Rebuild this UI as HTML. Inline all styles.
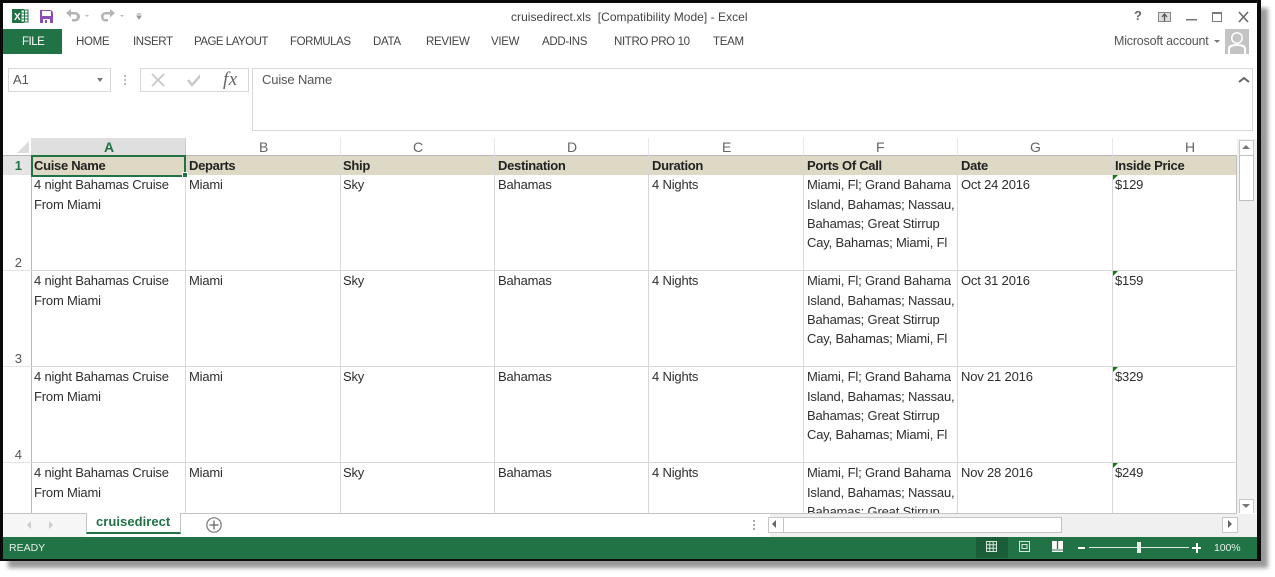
<!DOCTYPE html>
<html><head><meta charset="utf-8">
<style>
html,body{margin:0;padding:0;background:#fff}
#p{position:relative;width:1275px;height:577px;overflow:hidden;background:#fff;font-family:"Liberation Sans",sans-serif}
#p div,#p span.t{position:absolute}
.t{white-space:nowrap;line-height:16px}
.r{font-size:11.500px;color:#444;top:34px;line-height:16px;letter-spacing:-.3px}
.c{font-size:13px;color:#2e2e2e;letter-spacing:-.18px}
.b{font-size:13px;font-weight:bold;color:#222;top:158px;letter-spacing:-.3px}
.h{font-size:14px;color:#666;top:139px}
.rn{font-size:13px;color:#555;width:28px;text-align:right;left:-1px}
.vl{width:1px;background:#d8d8d8;top:155px;height:358px}
.hl{height:1px;background:#d8d8d8;left:31px;width:1206px}
.hv{width:1px;background:#e8e8e8;top:138px;height:17px}
.tri{width:0;height:0;border-top:5px solid #107c10;border-right:5px solid transparent}
</style></head><body>
<div id="p">
<!-- shadow -->
<div style="left:8px;top:8px;width:1260px;height:560px;background:#9a9a9a;filter:blur(2px)"></div>
<!-- frame -->
<div style="left:0;top:0;width:1261px;height:561px;background:#0a0a0a"></div>
<div style="left:3px;top:3px;width:1254px;height:556px;background:#fff;overflow:hidden" id="w"></div>

<!-- QAT -->
<svg style="position:absolute;left:0;top:0" width="160" height="30">
<rect x="12" y="9" width="12" height="14" fill="#1f7244"/>
<rect x="21" y="10" width="7" height="12" fill="#fff" stroke="#1f7244" stroke-width="1"/>
<path d="M21 13h7M21 16h7M21 19h7M24.500 10v12" stroke="#1f7244" stroke-width="1"/>
<text x="14" y="20" font-size="10" font-weight="bold" fill="#fff" font-family="Liberation Sans">X</text>
<path d="M40 10h11l2 2v11h-13z" fill="#8a4db5"/>
<rect x="42" y="11" width="9" height="5" fill="#fff"/>
<rect x="43" y="19" width="7" height="4" fill="#fff"/><rect x="45" y="20" width="2" height="3" fill="#8a4db5"/>
<path d="M66 13l5-4v3h4c3 0 5 2 5 4.500s-2 5-5 5h-3v-2.500h3c1 0 2-1 2-2.500s-1-2-2-2h-4v3z" fill="#b4b4b4"/>
<path d="M85 15h4l-2 2z" fill="#bbb"/>
<path d="M115 13l-5-4v3h-4c-3 0-5 2-5 4.500s2 5 4 5h3v-2.500h-3c-1 0-1.500-1-1.500-2.500s1-2 2-2h4.500v3z" fill="#b4b4b4"/>
<path d="M120 15h4l-2 2z" fill="#bbb"/>
<path d="M137 14h4M137 16h4l-2 3z" stroke="#999" stroke-width="1" fill="#999"/>
</svg>
<span class="t" style="left:511px;top:9px;font-size:12px;color:#444;letter-spacing:.04px">cruisedirect.xls&nbsp; [Compatibility Mode] - Excel</span>

<!-- window controls -->
<span class="t" style="left:1134px;top:8px;font-size:13px;font-weight:bold;color:#666">?</span>
<svg style="position:absolute;left:1150px;top:5px" width="105" height="25">
<rect x="8.500" y="7.500" width="12" height="9" fill="#ddd" stroke="#888"/>
<path d="M14.500 16v-6M12 12l2.500-3 2.500 3" stroke="#555" stroke-width="1.300" fill="none"/>
<rect x="36" y="14" width="11" height="1.500" fill="#777"/>
<rect x="62.500" y="7.500" width="9" height="9" fill="none" stroke="#777"/><rect x="62" y="7" width="10" height="2" fill="#777"/>
<path d="M89 7l9 10M98 7l-9 10" stroke="#666" stroke-width="1.500"/>
</svg>

<!-- Ribbon tabs -->
<div style="left:3px;top:29px;width:59px;height:25px;background:#217346"></div>
<span class="t" style="left:22px;top:34px;font-size:11.500px;color:#fff;letter-spacing:-.5px">FILE</span>
<span class="t r" style="left:76px">HOME</span>
<span class="t r" style="left:133px;letter-spacing:-.4px">INSERT</span>
<span class="t r" style="left:194px;letter-spacing:-.5px">PAGE LAYOUT</span>
<span class="t r" style="left:290px;letter-spacing:-.4px">FORMULAS</span>
<span class="t r" style="left:373px">DATA</span>
<span class="t r" style="left:426px">REVIEW</span>
<span class="t r" style="left:491px">VIEW</span>
<span class="t r" style="left:542px">ADD-INS</span>
<span class="t r" style="left:614px;letter-spacing:-.35px">NITRO PRO 10</span>
<span class="t r" style="left:713px">TEAM</span>
<span class="t" style="left:1114px;top:33px;font-size:12.500px;color:#555;letter-spacing:-.2px">Microsoft account</span>
<div style="left:1214px;top:40px;width:0;height:0;border:3px solid transparent;border-top:3px solid #777"></div>
<svg style="position:absolute;left:1225px;top:29px" width="24" height="25">
<rect width="24" height="25" fill="#c4c4c4"/>
<circle cx="12" cy="9" r="6" fill="#fff"/><circle cx="12" cy="9" r="4.500" fill="#c4c4c4"/>
<path d="M3 25v-6c0-3 5-4 9-4s9 1 9 4v6h-2v-5c0-2-4-3-7-3s-7 1-7 3v5z" fill="#fff"/>
</svg>

<!-- Name box / formula bar -->
<div style="left:8px;top:68px;width:101px;height:22px;border:1px solid #d8d8d8"></div>
<span class="t" style="left:13px;top:72px;font-size:13px;color:#555">A1</span>
<div style="left:97px;top:78px;width:0;height:0;border:3px solid transparent;border-top:4px solid #777"></div>
<div style="left:124px;top:75px;width:1px;height:10px;border-left:2px dotted #bbb"></div>
<div style="left:140px;top:68px;width:107px;height:22px;border:1px solid #d8d8d8"></div>
<svg style="position:absolute;left:150px;top:72px" width="50" height="16">
<path d="M2 2l12 12M14 2l-12 12" stroke="#c8c8c8" stroke-width="1.800"/>
<path d="M38 8l4 5 9-10" stroke="#c8c8c8" stroke-width="2.500" fill="none"/>
</svg>
<span class="t" style="left:223px;top:72px;font-family:'Liberation Serif',serif;font-style:italic;font-size:19px;color:#666;letter-spacing:.5px">fx</span>
<div style="left:252px;top:68px;width:999px;height:61px;border:1px solid #d8d8d8"></div>
<span class="t" style="left:262px;top:72px;font-size:13px;color:#555;letter-spacing:-.15px">Cuise Name</span>
<svg style="position:absolute;left:1238px;top:76px" width="12" height="8"><path d="M1 6l5-4 5 4" stroke="#666" stroke-width="2" fill="none"/></svg>

<!-- column header -->
<div style="left:3px;top:138px;width:1234px;height:17px;background:#fff"></div>
<div style="left:31px;top:138px;width:154px;height:17px;background:#dfdfdf"></div>
<svg style="position:absolute;left:15px;top:140px" width="16" height="15"><path d="M14 1v12h-12z" fill="#dcdcdc"/></svg>
<div class="hv" style="left:340px"></div><div class="hv" style="left:494px"></div><div class="hv" style="left:648px"></div><div class="hv" style="left:803px"></div><div class="hv" style="left:957px"></div><div class="hv" style="left:1112px"></div><div class="hv" style="left:185px;background:#ccc"></div>
<span class="t h" style="left:104px;color:#217346;font-weight:bold">A</span>
<span class="t h" style="left:259px">B</span>
<span class="t h" style="left:413px">C</span>
<span class="t h" style="left:567px">D</span>
<span class="t h" style="left:722px">E</span>
<span class="t h" style="left:876px">F</span>
<span class="t h" style="left:1030px">G</span>
<span class="t h" style="left:1185px">H</span>
<div style="left:3px;top:155px;width:1234px;height:1px;background:#b8b8b8"></div>

<!-- row 1 -->
<div style="left:3px;top:156px;width:28px;height:19px;background:#e4e4e4"></div>
<div style="left:31px;top:156px;width:1206px;height:19px;background:#ddd9c4"></div>
<span class="t rn" style="top:158px;left:-6px;color:#217346;font-weight:bold">1</span>

<!-- grid lines -->
<div style="left:31px;top:155px;width:1px;height:358px;background:#b8b8b8"></div>
<div class="vl" style="left:185px"></div><div class="vl" style="left:340px"></div><div class="vl" style="left:494px"></div><div class="vl" style="left:648px"></div><div class="vl" style="left:803px"></div><div class="vl" style="left:957px"></div><div class="vl" style="left:1112px"></div><div class="vl" style="left:1236px;background:#c0c0c0"></div>
<div class="hl" style="top:270px"></div><div class="hl" style="top:366px"></div><div class="hl" style="top:462px"></div>
<div style="left:3px;top:270px;width:28px;height:1px;background:#e4e4e4"></div>
<div style="left:3px;top:366px;width:28px;height:1px;background:#e4e4e4"></div>
<div style="left:3px;top:462px;width:28px;height:1px;background:#e4e4e4"></div>

<!-- header cells -->
<span class="t b" style="left:34px">Cuise Name</span>
<span class="t b" style="left:189px">Departs</span>
<span class="t b" style="left:343px">Ship</span>
<span class="t b" style="left:498px">Destination</span>
<span class="t b" style="left:652px">Duration</span>
<span class="t b" style="left:807px">Ports Of Call</span>
<span class="t b" style="left:961px">Date</span>
<span class="t b" style="left:1115px">Inside Price</span>

<!-- selection -->
<div style="left:31px;top:155px;width:151px;height:18px;border:2px solid #217346;box-sizing:content-box"></div>
<div style="left:183px;top:173px;width:4px;height:4px;background:#217346;border:1px solid #fff;margin:-1px"></div>

<!-- row numbers -->
<span class="t rn" style="top:255px;left:-6px">2</span>
<span class="t rn" style="top:351px;left:-6px">3</span>
<span class="t rn" style="top:447px;left:-6px">4</span>

<!-- row 2 -->
<span class="t c" style="left:34px;top:177px">4 night Bahamas Cruise</span>
<span class="t c" style="left:34px;top:197px">From Miami</span>
<span class="t c" style="left:189px;top:177px">Miami</span>
<span class="t c" style="left:343px;top:177px">Sky</span>
<span class="t c" style="left:498px;top:177px">Bahamas</span>
<span class="t c" style="left:652px;top:177px">4 Nights</span>
<span class="t c" style="left:807px;top:177px">Miami, Fl; Grand Bahama</span>
<span class="t c" style="left:807px;top:197px">Island, Bahamas; Nassau,</span>
<span class="t c" style="left:807px;top:216px">Bahamas; Great Stirrup</span>
<span class="t c" style="left:807px;top:235px">Cay, Bahamas; Miami, Fl</span>
<span class="t c" style="left:961px;top:177px">Oct 24 2016</span>
<span class="t c" style="left:1115px;top:177px">$129</span>
<div class="tri" style="left:1113px;top:175px"></div>

<!-- row 3 -->
<span class="t c" style="left:34px;top:273px">4 night Bahamas Cruise</span>
<span class="t c" style="left:34px;top:293px">From Miami</span>
<span class="t c" style="left:189px;top:273px">Miami</span>
<span class="t c" style="left:343px;top:273px">Sky</span>
<span class="t c" style="left:498px;top:273px">Bahamas</span>
<span class="t c" style="left:652px;top:273px">4 Nights</span>
<span class="t c" style="left:807px;top:273px">Miami, Fl; Grand Bahama</span>
<span class="t c" style="left:807px;top:293px">Island, Bahamas; Nassau,</span>
<span class="t c" style="left:807px;top:312px">Bahamas; Great Stirrup</span>
<span class="t c" style="left:807px;top:331px">Cay, Bahamas; Miami, Fl</span>
<span class="t c" style="left:961px;top:273px">Oct 31 2016</span>
<span class="t c" style="left:1115px;top:273px">$159</span>
<div class="tri" style="left:1113px;top:271px"></div>

<!-- row 4 -->
<span class="t c" style="left:34px;top:369px">4 night Bahamas Cruise</span>
<span class="t c" style="left:34px;top:389px">From Miami</span>
<span class="t c" style="left:189px;top:369px">Miami</span>
<span class="t c" style="left:343px;top:369px">Sky</span>
<span class="t c" style="left:498px;top:369px">Bahamas</span>
<span class="t c" style="left:652px;top:369px">4 Nights</span>
<span class="t c" style="left:807px;top:369px">Miami, Fl; Grand Bahama</span>
<span class="t c" style="left:807px;top:389px">Island, Bahamas; Nassau,</span>
<span class="t c" style="left:807px;top:408px">Bahamas; Great Stirrup</span>
<span class="t c" style="left:807px;top:427px">Cay, Bahamas; Miami, Fl</span>
<span class="t c" style="left:961px;top:369px">Nov 21 2016</span>
<span class="t c" style="left:1115px;top:369px">$329</span>
<div class="tri" style="left:1113px;top:367px"></div>

<!-- row 5 -->
<span class="t c" style="left:34px;top:465px">4 night Bahamas Cruise</span>
<span class="t c" style="left:34px;top:485px">From Miami</span>
<span class="t c" style="left:189px;top:465px">Miami</span>
<span class="t c" style="left:343px;top:465px">Sky</span>
<span class="t c" style="left:498px;top:465px">Bahamas</span>
<span class="t c" style="left:652px;top:465px">4 Nights</span>
<span class="t c" style="left:807px;top:465px">Miami, Fl; Grand Bahama</span>
<span class="t c" style="left:807px;top:485px">Island, Bahamas; Nassau,</span>
<span class="t c" style="left:807px;top:504px">Bahamas; Great Stirrup</span>
<span class="t c" style="left:961px;top:465px">Nov 28 2016</span>
<span class="t c" style="left:1115px;top:465px">$249</span>
<div class="tri" style="left:1113px;top:463px"></div>

<!-- vertical scrollbar -->
<div style="left:1237px;top:139px;width:20px;height:375px;background:#f0f0f0"></div>
<div style="left:1239px;top:140px;width:13px;height:14px;background:#fff;border:1px solid #c8c8c8"></div>
<div style="left:1242px;top:145px;width:0;height:0;border:4px solid transparent;border-bottom:4px solid #777;border-top:0"></div>
<div style="left:1239px;top:155px;width:13px;height:44px;background:#fff;border:1px solid #c0c0c0"></div>
<div style="left:1239px;top:499px;width:13px;height:13px;background:#fff;border:1px solid #c8c8c8"></div>
<div style="left:1242px;top:504px;width:0;height:0;border:4px solid transparent;border-top:4px solid #777;border-bottom:0"></div>

<!-- bottom bar -->
<div style="left:3px;top:513px;width:1254px;height:24px;background:#fff"></div>
<div style="left:3px;top:513px;width:83px;height:24px;background:#f6f6f6"></div>
<div style="left:3px;top:513px;width:1234px;height:1px;background:#c4c4c4"></div>
<div style="left:770px;top:514px;width:487px;height:23px;background:#f0f0f0"></div>
<svg style="position:absolute;left:22px;top:519px" width="36" height="12"><path d="M9 2v8l-4-4z" fill="#ccc"/><path d="M27 2v8l4-4z" fill="#ccc"/></svg>
<div style="left:86px;top:513px;width:93px;height:19px;background:#fff;border:1px solid #c4c4c4;border-top:0;border-bottom:2px solid #217346"></div>
<span class="t" style="left:96px;top:514px;font-size:13px;font-weight:bold;color:#217346;letter-spacing:.05px">cruisedirect</span>
<svg style="position:absolute;left:205px;top:516px" width="18" height="18"><circle cx="9" cy="9" r="7.200" fill="none" stroke="#777" stroke-width="1.200"/><path d="M9 4.500v9M4.500 9h9" stroke="#666" stroke-width="1.300"/></svg>
<div style="left:753px;top:520px;width:1px;height:10px;border-left:2px dotted #aaa"></div>
<div style="left:768px;top:517px;width:14px;height:14px;background:#fff;border:1px solid #c8c8c8"></div>
<div style="left:772px;top:520px;width:0;height:0;border:4px solid transparent;border-right:4px solid #666;border-left:0"></div>
<div style="left:783px;top:517px;width:277px;height:14px;background:#fff;border:1px solid #c4c4c4"></div>
<div style="left:1222px;top:517px;width:14px;height:14px;background:#fff;border:1px solid #c8c8c8"></div>
<div style="left:1228px;top:520px;width:0;height:0;border:4px solid transparent;border-left:4px solid #666;border-right:0"></div>

<!-- status bar -->
<div style="left:3px;top:537px;width:1254px;height:22px;background:#217346"></div>
<span class="t" style="left:9px;top:540px;font-size:10.500px;color:#e8f0ea">READY</span>
<div style="left:976px;top:537px;width:32px;height:21px;background:#1a5e39"></div>
<svg style="position:absolute;left:980px;top:538px" width="90" height="20">
<g stroke="#d6e6dc" fill="none"><rect x="6.500" y="3.500" width="10" height="10"/><path d="M6.500 6.800h10M6.500 10.200h10M9.800 3.500v10M13.200 3.500v10"/></g>
<g stroke="#d6e6dc" fill="none"><rect x="39.500" y="3.500" width="10" height="10"/><rect x="42" y="6.500" width="5" height="4"/></g>
<rect x="72" y="3" width="11" height="11" fill="#fff"/><path d="M77.500 3v8" stroke="#217346" stroke-width="1.300"/><path d="M72 12h11" stroke="#217346"/>
</svg>
<div style="left:1078px;top:547px;width:7px;height:2px;background:#fff"></div>
<div style="left:1089px;top:547px;width:100px;height:1px;background:#dfe9e3"></div>
<div style="left:1137px;top:542px;width:4px;height:11px;background:#e8f0ea"></div>
<div style="left:1192px;top:547px;width:9px;height:2px;background:#fff"></div>
<div style="left:1196px;top:543px;width:2px;height:10px;background:#fff"></div>
<span class="t" style="left:1214px;top:540px;font-size:10.500px;color:#e8f0ea;letter-spacing:-.1px">100%</span>
</div>
</body></html>
